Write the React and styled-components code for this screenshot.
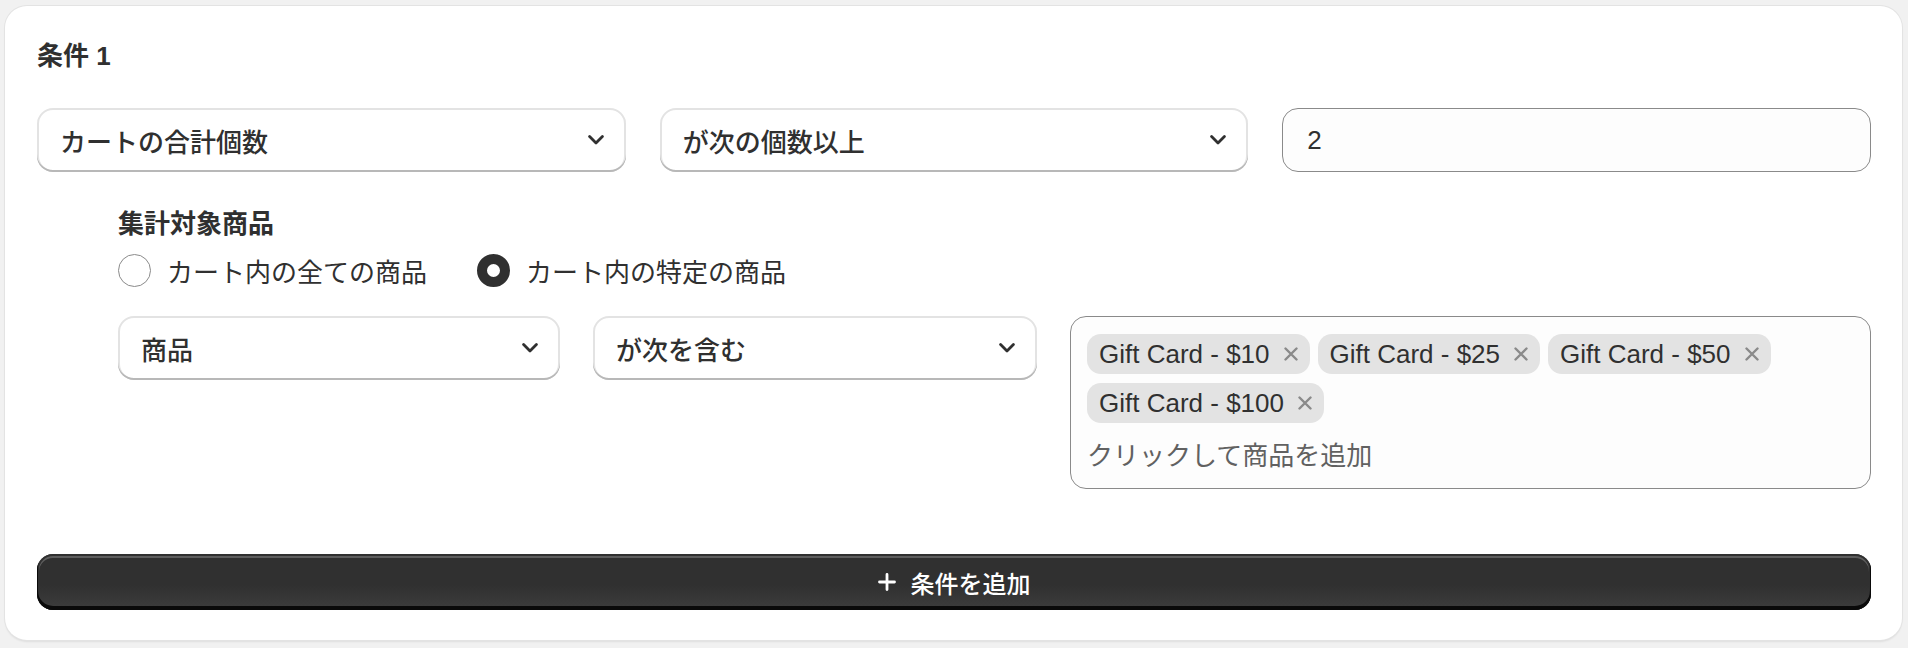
import styled, { createGlobalStyle } from "styled-components";

const GlobalStyle = createGlobalStyle`
  html, body {
    margin: 0;
    padding: 0;
    background: #f1f1f1;
  }
  body {
    font-family: "Liberation Sans", "Noto Sans CJK JP", sans-serif;
    color: #303030;
  }
`;

const Page = styled.div`
  padding: 6px 6px 6px 5px;
`;

const Card = styled.section`
  background: #ffffff;
  border-radius: 22px;
  box-shadow: 0 0 0 1px #e3e3e3, 0 2px 2px rgba(0, 0, 0, 0.08);
  padding: 32px 31px 30px 32px;
`;

const Title = styled.h2`
  margin: 0;
  font-size: 26px;
  line-height: 36px;
  font-weight: 600;
`;

const TopRow = styled.div`
  margin-top: 34px;
  display: grid;
  grid-template-columns: 1fr 1fr 1fr;
  gap: 34px;
`;

const Select = styled.div`
  height: 64px;
  box-sizing: border-box;
  display: flex;
  align-items: center;
  justify-content: space-between;
  padding: 0 22px 0 23px;
  background: #ffffff;
  border-radius: 16px;
  box-shadow: inset 0 -2px 0 #b8b8b8, inset 0 0 0 2px #e3e3e3;
  font-size: 26px;
  font-weight: 500;
  cursor: pointer;
`;

const TextField = styled.div`
  height: 64px;
  box-sizing: border-box;
  display: flex;
  align-items: center;
  padding: 0 24px;
  background: #fdfdfd;
  border: 1.5px solid #8a8a8a;
  border-radius: 16px;
  font-size: 26px;
`;

const Sub = styled.div`
  padding-left: 81px;
  margin-top: 32px;
`;

const SubLabel = styled.div`
  font-size: 26px;
  line-height: 40px;
  font-weight: 600;
`;

const RadioGroup = styled.div`
  margin-top: 4px;
  height: 44px;
  display: flex;
  align-items: center;
  gap: 50px;
`;

const RadioItem = styled.label`
  display: flex;
  align-items: center;
  gap: 16px;
  font-size: 26px;
  cursor: pointer;
`;

const RadioDot = styled.span`
  width: 33px;
  height: 33px;
  box-sizing: border-box;
  border-radius: 50%;
  background: #ffffff;
  border: ${(p) => (p.$checked ? "10px solid #303030" : "1.5px solid #8a8a8a")};
`;

const BottomRow = styled.div`
  margin-top: 24px;
  display: grid;
  grid-template-columns: 442px 444px 1fr;
  gap: 33px;
  align-items: start;
`;

const TagBox = styled.div`
  box-sizing: border-box;
  min-height: 173px;
  padding: 17px 16px 14px 16px;
  background: #fdfdfd;
  border: 1.5px solid #8a8a8a;
  border-radius: 16px;
`;

const Tags = styled.div`
  display: flex;
  flex-wrap: wrap;
  gap: 9px 8px;
`;

const Tag = styled.span`
  height: 40px;
  display: inline-flex;
  align-items: center;
  gap: 14px;
  padding: 0 12px;
  background: #e3e3e3;
  border-radius: 14px;
  font-size: 26px;
`;

const Placeholder = styled.div`
  margin-top: 16px;
  font-size: 26px;
  line-height: 34px;
  color: #616161;
`;

const AddButton = styled.button`
  margin-top: 65px;
  width: 100%;
  height: 56px;
  display: flex;
  align-items: center;
  justify-content: center;
  gap: 15px;
  border: none;
  border-radius: 16px;
  background: linear-gradient(#303030 0%, #303030 55%, #3d3d3d 100%);
  box-shadow: inset 0 -3px 0 1px #0a0a0a, inset 0 0 0 2px #303030,
    inset 0 2px 0 2px rgba(255, 255, 255, 0.22);
  color: #ffffff;
  font-family: inherit;
  font-size: 24px;
  font-weight: 500;
  cursor: pointer;
`;

const Chevron = () => (
  <svg width="16" height="10" viewBox="0 0 16 10" fill="none">
    <path d="M1.6 1.6L8 8L14.4 1.6" stroke="#303030" strokeWidth="2.8" strokeLinecap="round" strokeLinejoin="round" />
  </svg>
);

const Cross = () => (
  <svg width="14" height="14" viewBox="0 0 14 14" fill="none">
    <path d="M1.5 1.5L12.5 12.5M12.5 1.5L1.5 12.5" stroke="#8a8a8a" strokeWidth="2.4" strokeLinecap="round" />
  </svg>
);

const Plus = () => (
  <svg width="18" height="18" viewBox="0 0 18 18" fill="none">
    <path d="M9 1.5V16.5M1.5 9H16.5" stroke="#ffffff" strokeWidth="2.8" strokeLinecap="round" />
  </svg>
);

const products = ["Gift Card - $10", "Gift Card - $25", "Gift Card - $50", "Gift Card - $100"];

export default function App() {
  return (
    <Page>
      <GlobalStyle />
      <Card>
        <Title>条件 1</Title>
        <TopRow>
          <Select>
            カートの合計個数
            <Chevron />
          </Select>
          <Select>
            が次の個数以上
            <Chevron />
          </Select>
          <TextField>2</TextField>
        </TopRow>
        <Sub>
          <SubLabel>集計対象商品</SubLabel>
          <RadioGroup>
            <RadioItem>
              <RadioDot />
              カート内の全ての商品
            </RadioItem>
            <RadioItem>
              <RadioDot $checked />
              カート内の特定の商品
            </RadioItem>
          </RadioGroup>
          <BottomRow>
            <Select>
              商品
              <Chevron />
            </Select>
            <Select>
              が次を含む
              <Chevron />
            </Select>
            <TagBox>
              <Tags>
                {products.map((name) => (
                  <Tag key={name}>
                    {name}
                    <Cross />
                  </Tag>
                ))}
              </Tags>
              <Placeholder>クリックして商品を追加</Placeholder>
            </TagBox>
          </BottomRow>
        </Sub>
        <AddButton>
          <Plus />
          条件を追加
        </AddButton>
      </Card>
    </Page>
  );
}
